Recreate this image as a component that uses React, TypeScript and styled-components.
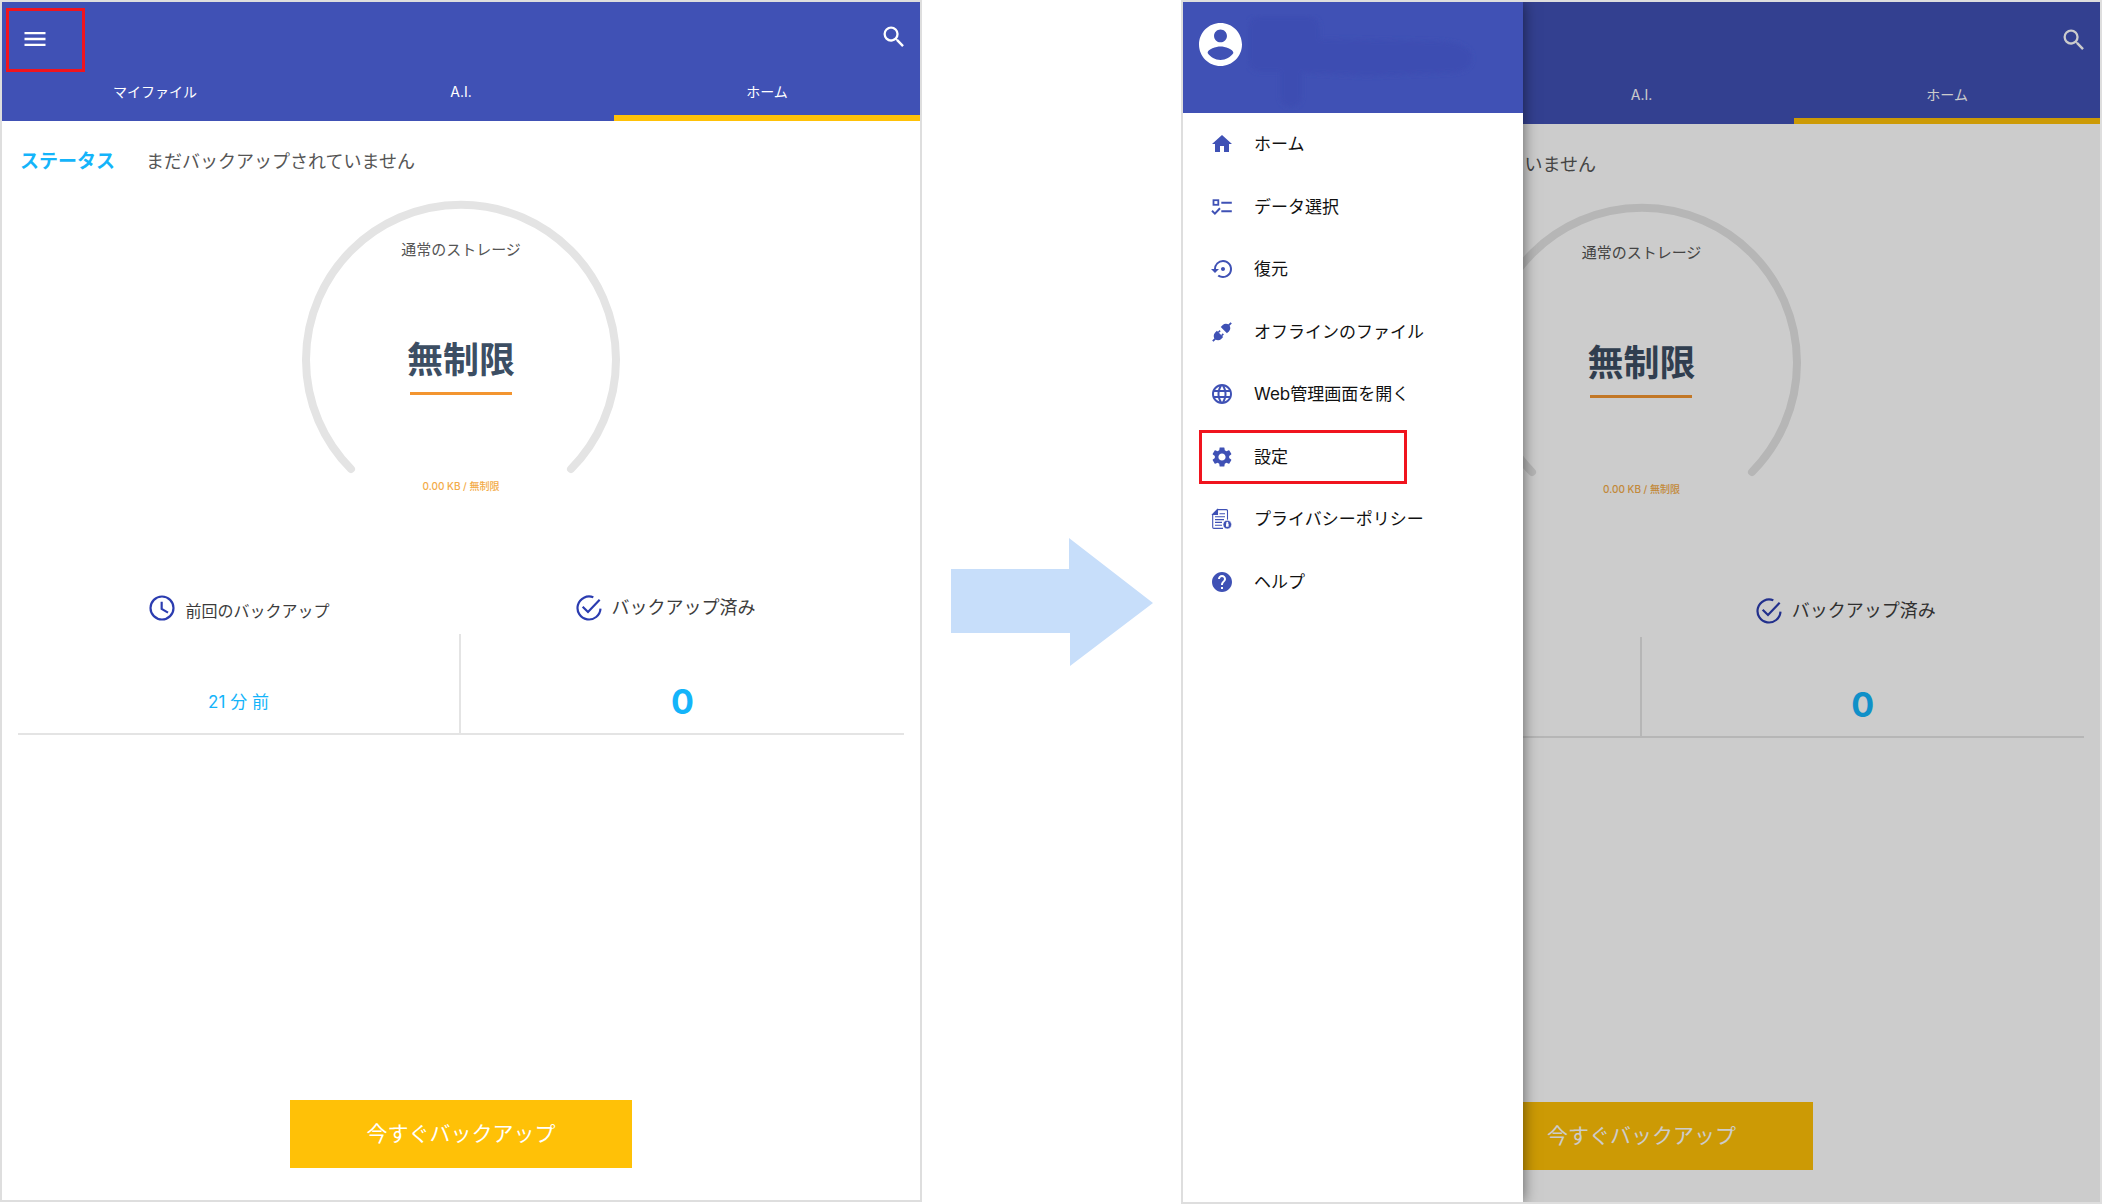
import React from "react";
import styled, { createGlobalStyle } from "styled-components";
import {
  MdHelp,
  MdHome,
  MdLanguage,
  MdMenu,
  MdSearch,
  MdSettings,
  MdSettingsBackupRestore,
} from "react-icons/md";

const color = {
  primary: "#4051b5",
  icon: "#3f51b5",
  iconDeep: "#2b3cb0",
  accent: "#ffc107",
  sky: "#14b4fa",
  line: "#e4e4e4",
  frame: "#dedede",
  highlight: "#f0141e",
};

const GlobalStyle = createGlobalStyle`
  *, *::before, *::after { box-sizing: border-box; }
  body {
    margin: 0;
    background: #fff;
    color: #111;
    font-family: Inter, "Noto Sans CJK JP", sans-serif;
  }
  button { font: inherit; color: inherit; border: 0; padding: 0; background: none; cursor: pointer; }
  svg { display: block; flex: none; }
`;

/* ---------- page ---------- */

const Page = styled.div`
  display: grid;
  grid-template-columns: minmax(0, 922fr) 259px minmax(0, 921fr);
  min-height: 100vh;
`;

const Device = styled.section<{ $gapBelow: number }>`
  position: relative;
  display: flex;
  flex-direction: column;
  margin-bottom: ${(p) => p.$gapBelow}px;
  border: 2px solid ${color.frame};
  overflow: hidden;
  background: #fff;
`;

const ArrowCell = styled.div`
  display: flex;
  align-items: center;
  justify-content: center;
`;

/* ---------- app bar ---------- */

const AppBar = styled.header<{ $inset: number }>`
  padding-top: ${(p) => p.$inset}px;
  background: ${color.primary};
  color: #fff;
`;

const Toolbar = styled.div`
  display: flex;
  align-items: center;
  justify-content: space-between;
  height: 70px;
  padding: 0 12px 0 4px;
`;

const MenuButton = styled.button<{ $marked: boolean }>`
  display: flex;
  align-items: center;
  align-self: flex-end;
  width: 79px;
  height: 64px;
  padding: 0 0 3px 12px;
  border: 3px solid ${(p) => (p.$marked ? color.highlight : "transparent")};
`;

const SearchButton = styled.button`
  display: flex;
`;

const Tabs = styled.nav`
  display: grid;
  grid-template-columns: repeat(3, 1fr);
`;

const Tab = styled.button<{ $active?: boolean }>`
  height: 49px;
  padding-bottom: 3px;
  border-bottom: 6px solid ${(p) => (p.$active ? color.accent : "transparent")};
  font-size: 14px;
  line-height: 20px;
`;

/* ---------- home screen ---------- */

const Main = styled.main`
  display: flex;
  flex: 1;
  flex-direction: column;
  padding: 27px 16px 32px;
`;

const StatusRow = styled.div`
  display: flex;
  align-items: center;
  gap: 31px;
  padding-left: 2px;
  line-height: 28px;
`;

const StatusLabel = styled.h2`
  margin: 0;
  color: ${color.sky};
  font-size: 19px;
  font-weight: 700;
`;

const StatusText = styled.span`
  color: #555;
  font-size: 18px;
`;

const Gauge = styled.div`
  display: grid;
  justify-items: center;
  margin-top: 24px;

  > * { grid-area: 1 / 1; }
`;

const GaugeText = styled.div`
  display: flex;
  flex-direction: column;
  align-items: center;
  padding-top: 38px;
`;

const GaugeLabel = styled.span`
  color: #555;
  font-size: 15px;
  line-height: 24px;
`;

const GaugeValue = styled.strong`
  display: flex;
  justify-content: center;
  width: 102px;
  margin-top: 76px;
  padding-bottom: 10px;
  border-bottom: 3px solid #f39530;
  color: #3c4e63;
  font-size: 36px;
  font-weight: 700;
  line-height: 44px;
  white-space: nowrap;
`;

const GaugeUsage = styled.span`
  margin-top: 83px;
  color: #f3ab48;
  font-size: 10px;
  font-weight: 500;
  line-height: 16px;
`;

const Stats = styled.div`
  display: grid;
  grid-template-columns: repeat(2, 1fr);
  margin-top: 76px;
  border-bottom: 2px solid ${color.line};
`;

const StatTitle = styled.div<{ $trail?: number }>`
  display: flex;
  align-items: center;
  justify-content: center;
  gap: 10px;
  height: 28px;
  margin-bottom: 12px;
  padding-right: ${(p) => p.$trail ?? 0}px;
`;

const StatName = styled.span<{ $size: number; $low?: boolean }>`
  align-self: ${(p) => (p.$low ? "flex-end" : "center")};
  color: #3c3c3c;
  font-size: ${(p) => p.$size}px;
  line-height: 22px;
`;

const StatBody = styled.div<{ $divided?: boolean }>`
  display: flex;
  align-items: center;
  justify-content: center;
  height: 99px;
  padding-top: 36px;
  border-right: ${(p) => (p.$divided ? `2px solid ${color.line}` : "0")};
  color: ${color.sky};
`;

const StatTime = styled.span`
  font-size: 17px;
  line-height: 24px;
`;

const StatCount = styled.span`
  font-size: 34px;
  font-weight: 700;
  line-height: 40px;
`;

const BackupButton = styled.button`
  align-self: center;
  width: 342px;
  height: 68px;
  margin-top: auto;
  background: ${color.accent};
  color: #fff;
  font-size: 21px;
  line-height: 32px;
`;

/* ---------- drawer ---------- */

const Scrim = styled.div`
  position: absolute;
  inset: 0;
  background: rgba(0, 0, 0, 0.2);
`;

const Drawer = styled.aside`
  position: absolute;
  inset: 0 auto 0 0;
  width: 340px;
  background: #fff;
  box-shadow: 0 0 14px rgba(0, 0, 0, 0.55);
`;

const Account = styled.div`
  display: flex;
  align-items: flex-start;
  gap: 4px;
  height: 111px;
  padding: 12px 0 0 16px;
  background: ${color.primary};
`;

const Avatar = styled.svg`
  margin-top: 9px;
`;

const MenuList = styled.ul`
  display: flex;
  flex-direction: column;
  height: 500px;
  margin: 0;
  padding: 0 16px;
  list-style: none;
`;

const MenuItem = styled.li`
  display: flex;
  flex: 1;
  align-items: center;
`;

const MenuLink = styled.a<{ $marked: boolean }>`
  display: flex;
  align-items: center;
  gap: 20px;
  width: ${(p) => (p.$marked ? "208px" : "100%")};
  height: 54px;
  padding: 0 8px;
  border: 3px solid ${(p) => (p.$marked ? color.highlight : "transparent")};
  color: #111;
  font-size: 17px;
  line-height: 24px;
  text-decoration: none;
  white-space: nowrap;

  > svg { color: ${color.icon}; }
`;

/* ---------- drawings ---------- */

const Arrow = () => (
  <svg width="202" height="128" viewBox="0 0 202 128" aria-hidden="true">
    <path d="M0 31H118V0L202 65L119 128V95H0Z" fill="#c7defa" />
  </svg>
);

const GaugeRing = () => (
  <svg width="318" height="318" viewBox="0 0 318 318" aria-hidden="true">
    <path
      d="M49 269A155 155 0 1 1 269 269"
      fill="none"
      stroke="#e4e4e4"
      strokeWidth="8"
      strokeLinecap="round"
    />
  </svg>
);

const ClockIcon = () => (
  <svg width="26" height="26" viewBox="0 0 78 78" fill="none" stroke={color.iconDeep} strokeWidth="6.500" aria-hidden="true">
    <circle cx="39" cy="39" r="34.5" />
    <path d="M38 20V42L57 53" />
  </svg>
);

const DoneIcon = () => (
  <svg width="26" height="26" viewBox="0 0 78 78" fill="none" stroke={color.iconDeep} strokeWidth="6.500" aria-hidden="true">
    <path d="M52 7A34.5 34.5 0 1 0 73.500 41" />
    <path d="M20 35L36 51L71 14" />
  </svg>
);

const AvatarIcon = () => (
  <Avatar width="43" height="43" viewBox="2 2 20 20" fill="#fff" aria-hidden="true">
    <path d="M12 2C6.480 2 2 6.480 2 12s4.480 10 10 10 10-4.480 10-10S17.520 2 12 2zm0 3c1.660 0 3 1.340 3 3s-1.340 3-3 3-3-1.340-3-3 1.340-3 3-3zm0 14.200c-2.500 0-4.710-1.280-6-3.220.03-1.990 4-3.080 6-3.080 1.990 0 5.970 1.090 6 3.080-1.290 1.940-3.500 3.220-6 3.220z" />
  </Avatar>
);

/* The account name is hidden behind a soft brush stroke. */
const HiddenName = () => (
  <svg width="232" height="98" viewBox="0 0 232 98" aria-hidden="true">
    <defs>
      <filter id="brush" x="-5%" y="-5%" width="110%" height="110%">
        <feGaussianBlur stdDeviation="2" />
      </filter>
    </defs>
    <g fill="#3d4eb2" filter="url(#brush)">
      <rect x="2" y="2" width="72" height="56" rx="12" />
      <path d="M30 24L190 27Q226 28 226 44Q226 58 205 59L120 62L30 58Z" />
      <rect x="34" y="40" width="22" height="53" rx="10" />
    </g>
  </svg>
);

const ChecklistIcon = () => (
  <svg width="24" height="24" viewBox="0 0 24 24" fill="none" stroke="currentColor" strokeWidth="2" aria-hidden="true">
    <rect x="3.500" y="5.200" width="4.800" height="4.600" strokeWidth="1.800" />
    <path d="M11.300 7.700H21.800M11.300 16.200H21.800M2 15.800L4.900 18.600L10 13.200" />
  </svg>
);

const UnplugIcon = () => (
  <svg width="24" height="24" viewBox="0 0 24 24" aria-hidden="true">
    <g transform="rotate(-45 12 12)" fill="currentColor">
      <rect x="-1" y="11.100" width="4" height="1.800" />
      <path d="M9.200 7.600V16.400H6.500A4.400 4.400 0 0 1 6.500 7.600Z" />
      <rect x="9" y="8.900" width="2.600" height="1.600" />
      <rect x="9" y="13.500" width="2.600" height="1.600" />
      <path d="M14.600 7.600V16.400H17.500A4.400 4.400 0 0 0 17.500 7.600Z" />
      <rect x="21" y="11.100" width="4" height="1.800" />
    </g>
  </svg>
);

const PolicyIcon = () => (
  <svg width="24" height="24" viewBox="0 0 24 24" fill="none" stroke="currentColor" strokeWidth="1.100" aria-hidden="true">
    <path d="M17.500 12.800V3.800Q17.500 2.600 16.300 2.600H7.500L2.700 7.400V20.200Q2.700 21.400 3.900 21.400H13" />
    <path d="M7.500 2.600V7.400H2.700Z" fill="currentColor" />
    <path d="M9.500 6.800H15M5 9.800H15M5 12.600H14M5 15.400H12M5 18.200H12" />
    <circle cx="17.300" cy="17.600" r="4.300" fill="currentColor" stroke="#fff" strokeWidth="0.600" />
    <path d="M16 19.800V17.200A1.300 1.300 0 0 1 18.600 17.200V19.800Z" fill="#fff" stroke="none" />
    <circle cx="17.300" cy="15.800" r="1" fill="#fff" stroke="none" />
  </svg>
);

/* ---------- screens ---------- */

const menu = [
  { label: "ホーム", icon: <MdHome size={24} /> },
  { label: "データ選択", icon: <ChecklistIcon /> },
  { label: "復元", icon: <MdSettingsBackupRestore size={24} viewBox="-1 0 24 24" /> },
  { label: "オフラインのファイル", icon: <UnplugIcon /> },
  { label: "Web管理画面を開く", icon: <MdLanguage size={24} /> },
  { label: "設定", icon: <MdSettings size={24} />, marked: true },
  { label: "プライバシーポリシー", icon: <PolicyIcon /> },
  { label: "ヘルプ", icon: <MdHelp size={24} /> },
];

function HomeScreen({ inset, menuMarked }: { inset: number; menuMarked: boolean }) {
  return (
    <>
      <AppBar $inset={inset}>
        <Toolbar>
          <MenuButton $marked={menuMarked} aria-label="メニュー">
            <MdMenu size={28} />
          </MenuButton>
          <SearchButton aria-label="検索">
            <MdSearch size={28} />
          </SearchButton>
        </Toolbar>
        <Tabs>
          <Tab>マイファイル</Tab>
          <Tab>A.I.</Tab>
          <Tab $active>ホーム</Tab>
        </Tabs>
      </AppBar>
      <Main>
        <StatusRow>
          <StatusLabel>ステータス</StatusLabel>
          <StatusText>まだバックアップされていません</StatusText>
        </StatusRow>
        <Gauge>
          <GaugeRing />
          <GaugeText>
            <GaugeLabel>通常のストレージ</GaugeLabel>
            <GaugeValue>無制限</GaugeValue>
            <GaugeUsage>0.00 KB / 無制限</GaugeUsage>
          </GaugeText>
        </Gauge>
        <Stats>
          <div>
            <StatTitle>
              <ClockIcon />
              <StatName $size={16} $low>前回のバックアップ</StatName>
            </StatTitle>
            <StatBody $divided>
              <StatTime>21 分 前</StatTime>
            </StatBody>
          </div>
          <div>
            <StatTitle $trail={34}>
              <DoneIcon />
              <StatName $size={18}>バックアップ済み</StatName>
            </StatTitle>
            <StatBody>
              <StatCount>0</StatCount>
            </StatBody>
          </div>
        </Stats>
        <BackupButton>今すぐバックアップ</BackupButton>
      </Main>
    </>
  );
}

function NavigationDrawer() {
  return (
    <Drawer>
      <Account>
        <AvatarIcon />
        <HiddenName />
      </Account>
      <MenuList>
        {menu.map((item) => (
          <MenuItem key={item.label}>
            <MenuLink href="#" $marked={Boolean(item.marked)}>
              {item.icon}
              {item.label}
            </MenuLink>
          </MenuItem>
        ))}
      </MenuList>
    </Drawer>
  );
}

export default function App() {
  return (
    <>
      <GlobalStyle />
      <Page>
        <Device $gapBelow={2}>
          <HomeScreen inset={0} menuMarked />
        </Device>
        <ArrowCell>
          <Arrow />
        </ArrowCell>
        <Device $gapBelow={0}>
          <HomeScreen inset={3} menuMarked={false} />
          <Scrim />
          <NavigationDrawer />
        </Device>
      </Page>
    </>
  );
}
